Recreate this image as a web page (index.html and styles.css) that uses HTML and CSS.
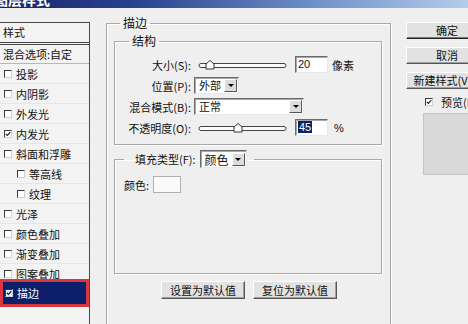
FILE: index.html
```html
<!DOCTYPE html>
<html lang="zh-CN">
<head>
<meta charset="UTF-8">
<title>图层样式</title>
<link rel="stylesheet" href="styles.css">
</head>
<body>

<div class="titlebar"><span>图层样式</span></div>

<div class="dialog">
  <div class="styles-list">
    <div class="list-head">样式</div>
    <div class="list-blend">混合选项:自定</div>
    <div class="item"><span class="cb"></span>投影</div>
    <div class="item"><span class="cb"></span>内阴影</div>
    <div class="item"><span class="cb"></span>外发光</div>
    <div class="item"><span class="cb on"><svg viewBox="0 0 6 6"><path d="M0.8 2.8 L2.4 4.4 L5.3 1.2" fill="none" stroke="#222" stroke-width="1.2"/></svg></span>内发光</div>
    <div class="item"><span class="cb"></span>斜面和浮雕</div>
    <div class="item sub"><span class="cb"></span>等高线</div>
    <div class="item sub"><span class="cb"></span>纹理</div>
    <div class="item"><span class="cb"></span>光泽</div>
    <div class="item"><span class="cb"></span>颜色叠加</div>
    <div class="item"><span class="cb"></span>渐变叠加</div>
    <div class="item"><span class="cb"></span>图案叠加</div>
    <div class="item selected"><span class="cb on"><svg viewBox="0 0 6 6"><path d="M0.8 2.8 L2.4 4.4 L5.3 1.2" fill="none" stroke="#0a246a" stroke-width="1.3"/></svg></span>描边</div>
  </div>

  <fieldset class="group stroke">
    <legend>描边</legend>

    <fieldset class="group structure">
      <legend>结构</legend>
      <div class="form-grid">
        <label>大小(S):</label>
        <div class="control">
          <svg class="slider" width="90" height="12" viewBox="0 0 90 12">
            <rect x="1" y="4.5" width="87" height="4" rx="2" fill="#fafafa" stroke="#444"/>
            <path d="M8 10 L8 5 L12 1.5 L16 5 L16 10 Z" fill="#fff" stroke="#333"/>
          </svg>
          <span class="field">20</span>
          <span class="unit">像素</span>
        </div>

        <label>位置(P):</label>
        <div class="control">
          <span class="select short"><span class="val">外部</span><span class="arrow"></span></span>
        </div>

        <label>混合模式(B):</label>
        <div class="control">
          <span class="select wide"><span class="val">正常</span><span class="arrow"></span></span>
        </div>

        <label>不透明度(O):</label>
        <div class="control">
          <svg class="slider" width="90" height="12" viewBox="0 0 90 12">
            <rect x="1" y="4.5" width="87" height="4" rx="2" fill="#fafafa" stroke="#444"/>
            <path d="M36 10 L36 5 L40 1.5 L44 5 L44 10 Z" fill="#fff" stroke="#333"/>
          </svg>
          <span class="field"><span class="hl">45</span></span>
          <span class="unit pct">%</span>
        </div>
      </div>
    </fieldset>

    <fieldset class="group fill">
      <legend><span class="legend-row">填充类型(F): <span class="select fill-type"><span class="val">颜色</span><span class="arrow"></span></span></span></legend>
      <div class="color-row">颜色: <span class="swatch"></span></div>
    </fieldset>

    <div class="defaults">
      <button>设置为默认值</button>
      <button>复位为默认值</button>
    </div>
  </fieldset>

  <div class="actions">
    <button class="primary">确定</button>
    <button>取消</button>
    <button>新建样式(V)...</button>
    <div class="preview-check"><span class="cb on"><svg viewBox="0 0 6 6"><path d="M0.8 2.8 L2.4 4.4 L5.3 1.2" fill="none" stroke="#222" stroke-width="1.2"/></svg></span>预览(P)</div>
    <div class="preview"></div>
  </div>
</div>

</body>
</html>
```

FILE: styles.css
```css
body {
    margin: 0;
    width: 468px;
    height: 324px;
    overflow: hidden;
    background-color: #efefef;
    font-family: "Noto Sans CJK SC", "Liberation Sans", sans-serif;
    font-size: 11px;
    color: #111;
}
.titlebar {
    height: 8px;
    overflow: hidden;
    background: linear-gradient(90deg, #17246a 0%, #2a4490 30%, #6a8cc6 65%, #b4cceb 100%);
    color: #fff;
    font-weight: bold;
    font-size: 14px;
    line-height: 16px;
}
.titlebar span { display: block; margin: -9px 0 0 -6px; }

.dialog {
    display: flex;
    align-items: flex-start;
    height: 316px;
    overflow: hidden;
}

/* left list */
.styles-list {
    width: 89px;
    height: 320px;
    margin-top: 14px;
    border-top: 1px solid #4a4a4a;
    border-right: 1px solid #4a4a4a;
    background-color: #f3f3f3;
    flex-shrink: 0;
}
.list-head {
    height: 19px;
    line-height: 19px;
    padding-left: 3px;
    border-bottom: 3px double #444;
}
.list-blend {
    height: 18px;
    line-height: 18px;
    padding-left: 3px;
    border-bottom: 1px solid #b8b8b8;
}
.item {
    height: 19px;
    border-bottom: 1px solid #e6e6e6;
    display: flex;
    align-items: center;
    gap: 4px;
    padding-left: 4px;
}
.item.sub { padding-left: 17px; }
.item.selected {
    position: relative;
    height: 22px;
    margin-top: -5px;
    border: 3px solid #d9363e;
    padding-left: 2px;
    background-color: #0c1f6b;
    color: #fff;
}
.cb {
    width: 6px;
    height: 6px;
    border: 1px solid;
    border-color: #3a3a3a #d0d0d0 #d0d0d0 #3a3a3a;
    background-color: #fff;
    flex-shrink: 0;
    display: flex;
}
.cb svg { width: 6px; height: 6px; }
.selected .cb { background-color: #e8e8f0; }

/* group boxes */
.group {
    margin: 0;
    min-inline-size: 0;
    border: 1px solid #a8a8a8;
    box-shadow: inset 1px 1px 0 #fff, 1px 1px 0 #fff;
}
.group legend {
    font-size: 12px;
    line-height: 14px;
    padding: 0 3px;
}
.stroke {
    box-sizing: border-box;
    width: 285px;
    height: 330px;
    margin: 8px 0 0 16px;
    padding: 4px 8px 0 7px;
    flex-shrink: 0;
}
.stroke > legend { margin-left: 6px; }
.structure { padding: 6px 0 6px 0; }
.structure > legend { margin-left: 14px; }

.form-grid {
    display: grid;
    grid-template-columns: 76px auto;
    grid-auto-rows: 21px;
    column-gap: 3px;
    align-items: center;
}
.form-grid label { text-align: right; white-space: nowrap; }
.control { display: flex; align-items: center; }
.slider { margin-left: 4px; }
.field {
    box-sizing: border-box;
    width: 33px;
    height: 17px;
    margin-left: 7px;
    padding-left: 2px;
    border: 1px solid;
    border-color: #6b6b6b #e8e8e8 #e8e8e8 #6b6b6b;
    box-shadow: inset 1px 1px 0 #a8a8a8;
    background-color: #fff;
    font-family: "Liberation Sans", sans-serif;
    line-height: 15px;
}
.hl { background-color: #0a246a; color: #fff; padding: 0 1px; }
.unit { margin-left: 4px; }
.unit.pct { margin-left: 6px; font-family: "Liberation Sans", sans-serif; }

.select {
    box-sizing: border-box;
    height: 17px;
    display: flex;
    align-items: center;
    border: 1px solid;
    border-color: #6b6b6b #e8e8e8 #e8e8e8 #6b6b6b;
    box-shadow: inset 1px 1px 0 #a8a8a8;
    background-color: #fff;
}
.select .val { flex: 1; padding-left: 4px; line-height: 15px; }
.select .arrow {
    box-sizing: border-box;
    width: 13px;
    height: 13px;
    margin-right: 1px;
    border: 1px solid;
    border-color: #fff #555 #555 #fff;
    background-color: #dcdcdc;
    display: flex;
    align-items: center;
    justify-content: center;
}
.select .arrow::after {
    content: "";
    border-left: 3px solid transparent;
    border-right: 3px solid transparent;
    border-top: 3px solid #000;
}
.select.short { width: 45px; }
.select.wide { width: 110px; }
.select.fill-type { width: 47px; height: 18px; font-size: 12px; }

.fill {
    margin-top: 5px;
    padding: 8px 0 80px 9px;
}
.fill > legend { padding: 0 7px 0 11px; font-size: 11px; }
.legend-row { display: inline-flex; align-items: center; gap: 4px; height: 18px; }
.color-row { display: flex; align-items: center; height: 17px; }
.swatch {
    box-sizing: border-box;
    width: 28px;
    height: 17px;
    margin-left: 4px;
    border: 1px solid #b0b0b0;
    background-color: #fafafa;
}

button {
    box-sizing: border-box;
    height: 18px;
    padding: 0;
    border: 1px solid;
    border-color: #fff #555 #555 #fff;
    box-shadow: inset -1px -1px 0 #a0a0a0;
    background-color: #e2e2e2;
    font-family: "Noto Sans CJK SC", "Liberation Sans", sans-serif;
    font-size: 11px;
    line-height: 15px;
    color: #111;
    white-space: nowrap;
}
.defaults {
    display: flex;
    justify-content: center;
    gap: 8px;
    margin-top: 7px;
    padding-left: 2px;
}
.defaults button { width: 84px; }

/* right column */
.actions {
    display: flex;
    flex-direction: column;
    gap: 8px;
    margin: 14px 0 0 15px;
    flex-shrink: 0;
}
.actions button { width: 82px; height: 17px; text-align: center; }
.actions button.primary { border-color: #fff #222 #222 #fff; box-shadow: inset -1px -1px 0 #777; }
.preview-check {
    display: flex;
    align-items: center;
    gap: 8px;
    height: 16px;
    margin: -3px 0 0 19px;
}
.preview {
    width: 60px;
    height: 60px;
    margin: -5px 0 0 17px;
    background-color: #d8d8d8;
    border: 1px solid #c6c6c6;
}
```
